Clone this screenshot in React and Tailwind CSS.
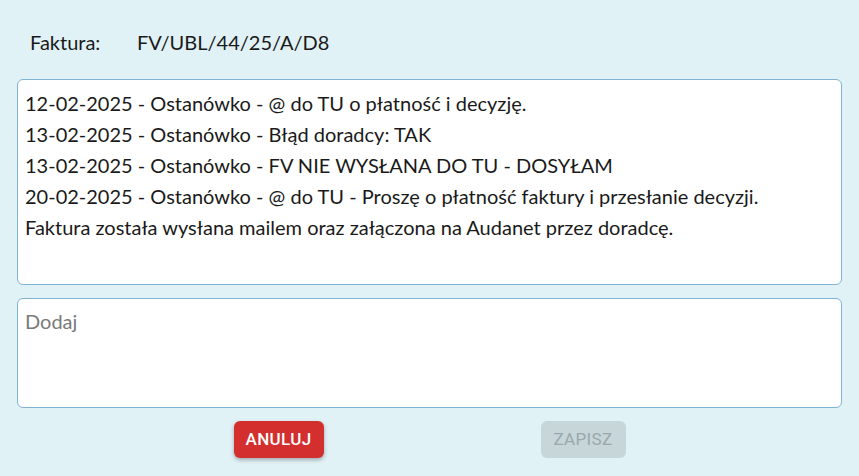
const notes = [
  "12-02-2025 - Ostanówko - @ do TU o płatność i decyzję.",
  "13-02-2025 - Ostanówko - Błąd doradcy: TAK",
  "13-02-2025 - Ostanówko - FV NIE WYSŁANA DO TU - DOSYŁAM",
  "20-02-2025 - Ostanówko - @ do TU - Proszę o płatność faktury i przesłanie decyzji.",
  "Faktura została wysłana mailem oraz załączona na Audanet przez doradcę.",
];

const App = () => {
  return (
    <div className="h-[476px] w-[859px] overflow-hidden bg-[#e1f2f7] px-[17px] pt-[28px] font-['Lato',sans-serif] text-[#1a1a1a]">
      <div className="flex items-center pl-[13px] text-[20px] leading-[28px]">
        <span className="w-[107px]">Faktura:</span>
        <span>FV/UBL/44/25/A/D8</span>
      </div>

      <div className="mt-[23px] h-[206px] rounded-md border border-[#7fb3d3] bg-white px-[7px] pt-[8px] text-[20px] leading-[31px]">
        {notes.map((line) => (
          <div key={line} className="whitespace-nowrap">
            {line}
          </div>
        ))}
      </div>

      <textarea
        placeholder="Dodaj"
        className="mt-[13px] block h-[110px] w-full resize-none rounded-md border border-[#7fb3d3] bg-white px-[7px] py-[9px] text-[20px] leading-[26px] outline-none placeholder:text-[#7a7a7a]"
      />

      <div className="mt-[13px] flex justify-center gap-[217px] font-['Roboto',sans-serif] text-[17px] tracking-[0.02em]">
        <button className="h-[37px] w-[90px] rounded-md bg-[#d32f2f] font-medium text-white shadow-[0_2px_4px_rgba(0,0,0,0.3)]">
          ANULUJ
        </button>
        <button disabled className="h-[37px] w-[85px] rounded-md bg-[#c6d6d9] text-[#9aa8aa]">
          ZAPISZ
        </button>
      </div>
    </div>
  );
};

export default App;
